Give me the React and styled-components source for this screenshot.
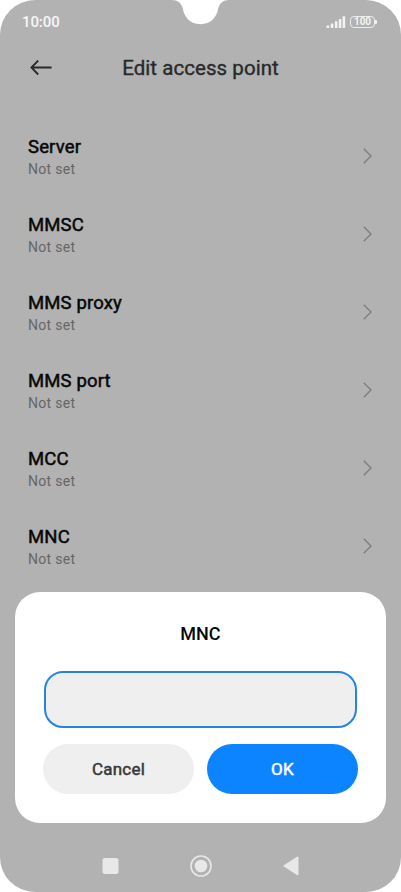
import React from "react"
import styled, { createGlobalStyle } from "styled-components"

const GlobalStyle = createGlobalStyle`
  * {
    box-sizing: border-box;
  }

  body {
    margin: 0;
    background-color: white;
    font-family: Roboto, sans-serif;
  }
`

const Phone = styled.main`
  display: flex;
  flex-direction: column;
  position: relative;
  width: 401px;
  height: 892px;
  overflow: hidden;
  border-radius: 35px;
  background-color: #b2b2b2;
`

const Notch = styled.svg`
  position: absolute;
  top: 0;
  left: 172px;
`

const StatusBar = styled.div`
  display: flex;
  align-items: center;
  justify-content: space-between;
  height: 44px;
  padding: 0 24px 0 22px;
`

const Time = styled.span`
  color: #f7f7f7;
  font-size: 15px;
  font-weight: 500;
  letter-spacing: -0.1px;
`

const StatusIcons = styled.div`
  display: flex;
  align-items: center;
  gap: 4px;
`

const Battery = styled.div`
  display: flex;
  align-items: center;
`

const BatteryBody = styled.span`
  width: 25px;
  height: 12px;
  border: 1.4px solid #ededed;
  border-radius: 4px;
  color: #f2f2f2;
  font-size: 10px;
  font-weight: 700;
  line-height: 10px;
  text-align: center;
`

const BatteryTip = styled.span`
  width: 2px;
  height: 4px;
  border-radius: 0 1px 1px 0;
  background-color: #f2f2f2;
`

const Header = styled.header`
  display: grid;
  grid-template-columns: 52px 1fr 52px;
  align-items: center;
  height: 47px;
`

const BackButton = styled.button`
  display: flex;
  justify-content: flex-end;
  padding: 0;
  border: 0;
  background: none;
`

const Title = styled.h1`
  margin: 0;
  color: #292929;
  font-size: 20.5px;
  font-weight: 400;
  line-height: 24px;
  letter-spacing: 0.05px;
  text-align: center;
  -webkit-text-stroke: 0.35px;
`

const Settings = styled.ul`
  margin: 26px 0 7px;
  padding: 0 29px 0 28px;
  list-style-type: none;
`

const Setting = styled.li`
  display: flex;
  align-items: center;
  justify-content: space-between;
  height: 78px;
`

const SettingText = styled.div`
  padding-top: 3px;
`

const SettingName = styled.div`
  color: #080808;
  font-size: 18.5px;
  font-weight: 400;
  line-height: 22px;
  letter-spacing: 0.15px;
  -webkit-text-stroke: 0.5px;
`

const SettingValue = styled.div`
  color: #666;
  font-size: 14px;
  line-height: 22px;
  letter-spacing: 0.3px;
`

const Dialog = styled.section`
  height: 231px;
  margin: 0 15px;
  padding: 30px 28px 0;
  border-radius: 25px;
  background-color: white;
`

const DialogTitle = styled.h2`
  margin: 0 0 24.5px;
  color: #080808;
  font-size: 18px;
  font-weight: 500;
  line-height: 24px;
  text-align: center;
`

const Input = styled.input`
  display: block;
  width: 313px;
  height: 57px;
  margin-left: 1px;
  padding: 0 16px;
  border: 2px solid #2484e4;
  border-radius: 19px;
  outline: none;
  background-color: #efefef;
`

const Actions = styled.div`
  display: flex;
  gap: 13px;
  margin-top: 16px;
`

const Action = styled.button`
  flex: 1;
  height: 50px;
  padding: 0;
  border: 0;
  border-radius: 25px;
  background-color: ${({ $primary }) => ($primary ? "#0d84ff" : "#efefef")};
  color: ${({ $primary }) => ($primary ? "white" : "#383838")};
  font-family: inherit;
  font-size: 17px;
  font-weight: 400;
  letter-spacing: 0.2px;
  -webkit-text-stroke: 0.5px;
`

const NavBar = styled.nav`
  display: flex;
  align-items: center;
  justify-content: center;
  gap: 66px;
  height: 69px;
  padding-top: 17px;
`

const settings = ["Server", "MMSC", "MMS proxy", "MMS port", "MCC", "MNC"]

const Signal = () => (
  <svg width="20" height="13" fill="#f2f2f2">
    <rect x="0.5" y="9.5" width="2.7" height="2.5" rx="0.5" />
    <rect x="4.7" y="7.5" width="2.7" height="4.5" rx="0.5" />
    <rect x="8.9" y="5.2" width="2.6" height="6.8" rx="0.5" />
    <rect x="12.8" y="3" width="2.6" height="9" rx="0.5" />
    <rect x="16.6" y="0.3" width="2.6" height="11.7" rx="0.5" />
  </svg>
)

const BackArrow = () => (
  <svg width="22" height="16" fill="none" stroke="#292929" strokeWidth="1.8">
    <path d="M8.2 .5 1.4 7.5l6.8 7M1.4 7.5H21.6" />
  </svg>
)

const Chevron = () => (
  <svg width="9" height="16" fill="none" stroke="#7c7c7c" strokeWidth="1.3">
    <path d="M0.8 0.8 8 8 0.8 15.2" />
  </svg>
)

const App = () => (
  <>
    <GlobalStyle />
    <Phone>
      <Notch width="57" height="25" fill="white">
        <path d="M0 0C6 0 9 3 10.7 8C12 17 18 24.2 28.5 24.2S45 17 46.3 8C48 3 51 0 57 0Z" />
      </Notch>
      <StatusBar>
        <Time>10:00</Time>
        <StatusIcons>
          <Signal />
          <Battery>
            <BatteryBody>100</BatteryBody>
            <BatteryTip />
          </Battery>
        </StatusIcons>
      </StatusBar>
      <Header>
        <BackButton aria-label="Back">
          <BackArrow />
        </BackButton>
        <Title>Edit access point</Title>
      </Header>
      <Settings>
        {settings.map(name => (
          <Setting key={name}>
            <SettingText>
              <SettingName>{name}</SettingName>
              <SettingValue>Not set</SettingValue>
            </SettingText>
            <Chevron />
          </Setting>
        ))}
      </Settings>
      <Dialog>
        <DialogTitle>MNC</DialogTitle>
        <Input aria-label="MNC" />
        <Actions>
          <Action>Cancel</Action>
          <Action $primary>OK</Action>
        </Actions>
      </Dialog>
      <NavBar>
        <svg width="24" height="24" fill="#e8e8e8">
          <rect x="3.5" y="4" width="16" height="16" rx="2.5" />
        </svg>
        <svg width="24" height="24" fill="#e8e8e8">
          <circle cx="12" cy="12" r="10" fill="none" stroke="#e8e8e8" strokeWidth="1.6" />
          <circle cx="12" cy="12" r="6.3" />
        </svg>
        <svg width="24" height="24" fill="#e8e8e8">
          <path d="M4.8 11.2 18 2.8Q19.5 2 19.5 3.5V20Q19.5 21.8 18 20.9L4.8 12.6Q3.8 11.9 4.8 11.2Z" />
        </svg>
      </NavBar>
    </Phone>
  </>
)

export default App
